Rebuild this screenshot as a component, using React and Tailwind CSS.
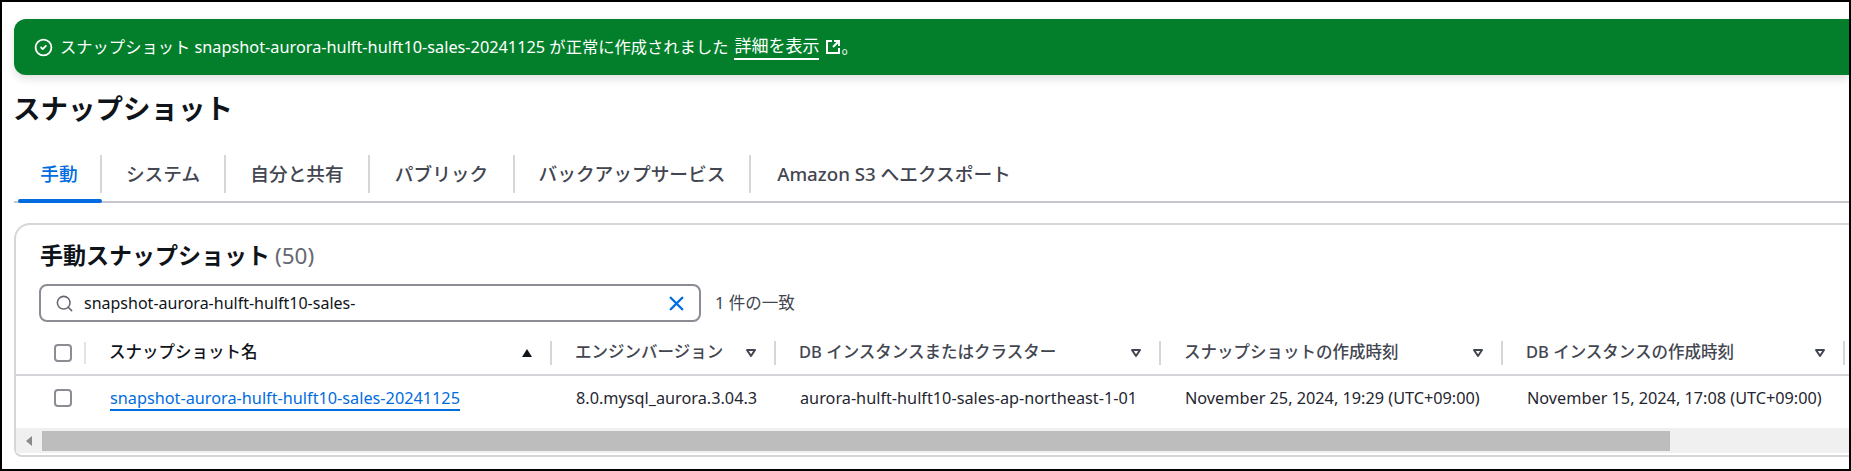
import React from 'react';
import { CircleCheck, Search, X } from 'lucide-react';

const font = 'font-["Noto_Sans","Noto_Sans_CJK_JP",sans-serif]';

const tabs = [
  { label: '手動', width: 'w-[84px]', active: true },
  { label: 'システム', width: 'w-[124px]' },
  { label: '自分と共有', width: 'w-[144px]' },
  { label: 'パブリック', width: 'w-[145px]' },
  { label: 'バックアップサービス', width: 'w-[236px]' },
  { label: 'Amazon S3 へエクスポート', width: 'w-[286px]', last: true },
];

const columns = [
  { label: 'スナップショット名', width: 'w-[466px]', sorted: true, value: 'snapshot-aurora-hulft-hulft10-sales-20241125', link: true },
  { label: 'エンジンバージョン', width: 'w-[224px]', value: '8.0.mysql_aurora.3.04.3' },
  { label: 'DB インスタンスまたはクラスター', width: 'w-[385px]', value: 'aurora-hulft-hulft10-sales-ap-northeast-1-01' },
  { label: 'スナップショットの作成時刻', width: 'w-[342px]', value: 'November 25, 2024, 19:29 (UTC+09:00)' },
  { label: 'DB インスタンスの作成時刻', width: 'w-[342px]', value: 'November 15, 2024, 17:08 (UTC+09:00)' },
];

const Checkbox = () => (
  <span className="block w-[18px] h-[18px] rounded-[4px] border-2 border-[#8c8c94] bg-white" />
);

const SortIcon = ({ sorted }) => (
  <svg width="12" height="10" viewBox="0 0 12 10" className="shrink-0">
    {sorted ? (
      <path d="M6 1 L11 9 L1 9 Z" fill="#0f141a" />
    ) : (
      <path d="M2 2 L10 2 L6 8 Z" fill="none" stroke="#424650" strokeWidth="2" strokeLinejoin="round" />
    )}
  </svg>
);

const ExternalIcon = () => (
  <svg width="16" height="16" viewBox="0 0 16 16" fill="none" stroke="white" strokeWidth="2" className="ml-[6px] shrink-0">
    <path d="M7 2 H2 V14 H14 V9" />
    <path d="M9 2 H14 V7 M14 2 L8 8" />
  </svg>
);

const App = () => {
  return (
    <div className={`${font} w-[1851px] h-[471px] overflow-hidden bg-white border-2 border-black pl-3 pt-[17px]`}>
      <div className="h-[56px] rounded-l-xl bg-[#037f2c] text-white text-[16.3px] flex items-center pl-[20px] shadow-[0_4px_8px_rgba(0,0,0,0.12)]">
        <CircleCheck size={19} strokeWidth={2.25} className="shrink-0 mr-[7px]" />
        <span>スナップショット snapshot-aurora-hulft-hulft10-sales-20241125 が正常に作成されました</span>
        <span className="ml-[6px] border-b-2 border-white leading-[24px] text-[17px]">詳細を表示</span>
        <ExternalIcon />
        <span>。</span>
      </div>

      <h1 className="mt-[14px] -ml-[1px] h-[40px] leading-[40px] text-[27.5px] font-semibold text-[#0f141a]">スナップショット</h1>

      <div className="mt-[26px] relative h-[48px] border-b-2 border-[#c6c6cd] flex items-start">
        {tabs.map((tab) => (
          <div
            key={tab.label}
            className={`${tab.width} h-[38px] flex items-center justify-center text-[18.7px] font-medium ${tab.active ? 'text-[#006ce0] ml-[4px]' : 'text-[#424650]'} ${tab.last ? '' : 'border-r-2 border-[#d5d5da]'}`}
          >
            {tab.label}
          </div>
        ))}
        <div className="absolute left-[4px] bottom-[-2px] w-[84px] h-[4px] rounded-sm bg-[#006ce0]" />
      </div>

      <div className="mt-[20px] rounded-tl-2xl rounded-bl-lg border-2 border-r-0 border-[#d5d5da] h-[234px] flex flex-col">
        <div className="pl-[24px] pt-[8px] h-[53px] flex items-center">
          <span className="text-[23px] font-semibold text-[#0f141a]">手動スナップショット</span>
          <span className="ml-[5px] text-[22.5px] text-[#656871]">(50)</span>
        </div>

        <div className="pl-[23px] flex items-center mt-[6px]">
          <div className="w-[662px] h-[38px] rounded-lg border-2 border-[#8c8c94] flex items-center pl-[14px] pr-[11px] text-[16px] text-[#0f141a]">
            <Search size={19} strokeWidth={2} className="text-[#656871] shrink-0" />
            <span className="ml-[10px] flex-1">snapshot-aurora-hulft-hulft10-sales-</span>
            <X size={23} strokeWidth={2.5} className="text-[#006ce0] shrink-0" />
          </div>
          <span className="ml-[14px] text-[16.5px] text-[#424650]">1 件の一致</span>
        </div>

        <div className="pl-[23px] mt-[9px] flex h-[45px] border-b-2 border-[#d5d5da] items-center">
          <div className="w-[47px] h-[22px] pl-[15px] flex items-center border-r-2 border-[#e3e3e6]">
            <Checkbox />
          </div>
          {columns.map((col) => (
            <div key={col.label} className={`${col.width} shrink-0 h-[24px] flex items-center justify-between pl-[23px] pr-[17px] border-r-2 border-[#d5d5da]`}>
              <span className={`text-[16.5px] font-medium ${col.sorted ? 'text-[#0f141a]' : 'text-[#424650]'}`}>{col.label}</span>
              <SortIcon sorted={col.sorted} />
            </div>
          ))}
        </div>

        <div className="pl-[23px] flex h-[52px] items-start pt-[10px] text-[16.25px] text-[#1f2630]">
          <div className="w-[47px] pl-[15px] pt-[3px] flex items-center">
            <Checkbox />
          </div>
          {columns.map((col) => (
            <div key={col.label} className={`${col.width} shrink-0 pl-[24px] whitespace-nowrap`}>
              {col.link ? (
                <span className="text-[#006ce0] border-b-2 border-[#006ce0]">{col.value}</span>
              ) : (
                col.value
              )}
            </div>
          ))}
        </div>

        <div className="h-[25px] bg-[#f0f0f0] flex items-center">
          <div className="w-[26px] flex justify-center">
            <svg width="7" height="10" viewBox="0 0 7 10">
              <path d="M6 0 L6 10 L0 5 Z" fill="#8a8a8a" />
            </svg>
          </div>
          <div className="w-[1628px] h-[20px] bg-[#bdbdbd]" />
        </div>
      </div>
    </div>
  );
};

export default App;
